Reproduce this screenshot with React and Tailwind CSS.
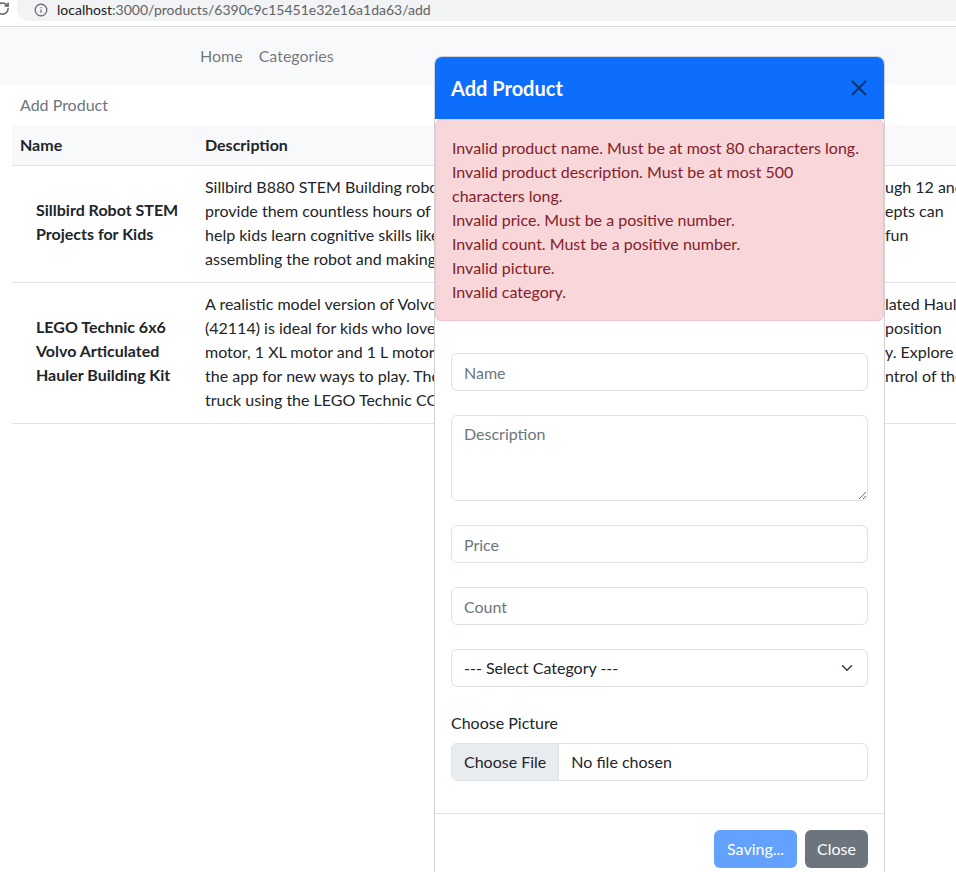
import React from 'react';
import { RotateCw, Info } from 'lucide-react';

const products = [
  {
    id: 1,
    name: ['Sillbird Robot STEM', 'Projects for Kids'],
    pad: 'pt-[9px] pb-[11px]',
    lines: [
      ['Sillbird B880 STEM Building robot kit is designed for kids aged 8 thro', 'ugh 12 and'],
      ['provide them countless hours of fun while basic engineering conc', 'epts can'],
      ['help kids learn cognitive skills like problem solving and have', ' fun'],
      ['assembling the robot and making it move.', ''],
    ],
  },
  {
    id: 2,
    name: ['LEGO Technic 6x6', 'Volvo Articulated', 'Hauler Building Kit'],
    pad: 'pt-[9px] pb-[11px]',
    lines: [
      ['A realistic model version of Volvo’s 6x6 Volvo Artic', 'lated Hauler'],
      ['(42114) is ideal for kids who love construction vehicles. It has a p', 'position'],
      ['motor, 1 XL motor and 1 L motor controlled through the CONTROL+ ap', 'y. Explore'],
      ['the app for new ways to play. The challenge is to take full co', 'ntrol of the'],
      ['truck using the LEGO Technic CONTROL+ app.', ''],
    ],
  },
];

const errors = [
  'Invalid product name. Must be at most 80 characters long.',
  'Invalid product description. Must be at most 500 characters long.',
  'Invalid price. Must be a positive number.',
  'Invalid count. Must be a positive number.',
  'Invalid picture.',
  'Invalid category.',
];

const App = () => {
  return (
    <div className="relative w-[956px] h-[872px] overflow-hidden bg-white font-['Lato',sans-serif] text-[#212529]">
      {/* Browser address bar */}
      <div className="h-[27px] flex border-b border-[#dadce0] bg-white">
        <div className="w-[22px] h-[22px] flex items-start -ml-[5px] pt-[1px] text-[#5f6368]">
          <RotateCw size={15} strokeWidth={2.4} />
        </div>
        <div className="flex-1 h-[22px] bg-[#f1f3f4] rounded-bl-[12px] flex items-center pl-[17px] -mt-[1px]">
          <Info size={14} strokeWidth={2} className="text-[#5f6368]" />
          <span className="ml-[9px] text-[14px] leading-none text-[#5f6368]">
            <span className="text-[#202124]">localhost</span>:3000/products/6390c9c15451e32e16a1da63/add
          </span>
        </div>
      </div>

      {/* Navbar */}
      <nav className="h-[58px] bg-[#f8f9fa] flex items-center pl-[192px]">
        <a className="px-2 text-black/55">Home</a>
        <a className="px-2 text-black/55">Categories</a>
      </nav>

      <div className="h-10 flex items-center px-5 text-[#6c757d]">Add Product</div>

      {/* Products table */}
      <table className="ml-3 w-[1200px] border-collapse leading-6">
        <thead>
          <tr className="bg-[#f8f9fa] border-b border-[#dee2e6]">
            <th className="w-[185px] px-2 py-2 text-left font-bold">Name</th>
            <th className="px-2 py-2 text-left font-bold">Description</th>
          </tr>
        </thead>
        <tbody>
          {products.map(p => (
            <tr key={p.id} className="border-b border-[#dee2e6]">
              <td className="pl-6 pr-1 pb-1 align-middle font-bold whitespace-nowrap">
                {p.name.map(n => (
                  <div key={n}>{n}</div>
                ))}
              </td>
              <td className={`px-2 ${p.pad}`}>
                {p.lines.map(([left, right], i) => (
                  <div key={i} className="flex whitespace-nowrap">
                    <span className="inline-block w-[680px] overflow-hidden">{left}</span>
                    <span>{right}</span>
                  </div>
                ))}
              </td>
            </tr>
          ))}
        </tbody>
      </table>

      {/* Add product modal */}
      <div className="absolute left-[434px] top-[56px] w-[451px] bg-white border border-black/[.175] rounded-lg">
        <div className="h-[62px] bg-[#0d6efd] rounded-t-[7px] flex items-center justify-between px-4">
          <h5 className="text-xl leading-[30px] font-bold text-white">Add Product</h5>
          <button className="w-8 h-8 flex items-center justify-center mr-[-7px]">
            <svg width="16" height="16" viewBox="0 0 16 16">
              <path d="M1 1L15 15M15 1L1 15" stroke="#0a3468" strokeWidth="2" />
            </svg>
          </button>
        </div>

        <div className="bg-[#f8d7da] border border-[#f5c2c7] text-[#842029] rounded-md p-4 leading-6">
          {errors.map(e => (
            <div key={e}>{e}</div>
          ))}
        </div>

        <form className="px-4 pt-[32px] pb-8">
          <input
            placeholder="Name"
            className="block w-full h-[38px] mb-6 px-3 border border-[#dee2e6] rounded-md outline-none placeholder:text-[#6c757d]"
          />
          <textarea
            rows={3}
            placeholder="Description"
            className="block w-full h-[86px] mb-6 px-3 py-1.5 leading-6 border border-[#dee2e6] rounded-md outline-none placeholder:text-[#6c757d]"
          />
          <input
            placeholder="Price"
            className="block w-full h-[38px] mb-6 px-3 border border-[#dee2e6] rounded-md outline-none placeholder:text-[#6c757d]"
          />
          <input
            placeholder="Count"
            className="block w-full h-[38px] mb-6 px-3 border border-[#dee2e6] rounded-md outline-none placeholder:text-[#6c757d]"
          />
          <div className="relative h-[38px] mb-6 border border-[#dee2e6] rounded-md flex items-center px-3">
            <span>--- Select Category ---</span>
            <svg className="absolute right-3 top-[12px]" width="16" height="12" viewBox="0 0 16 16">
              <path d="M2 5l6 6 6-6" fill="none" stroke="#343a40" strokeWidth="2" strokeLinecap="round" strokeLinejoin="round" />
            </svg>
          </div>
          <label className="block mb-2 leading-6">Choose Picture</label>
          <div className="h-[38px] flex border border-[#dee2e6] rounded-md overflow-hidden">
            <span className="px-3 flex items-center bg-[#e9ecef] border-r border-[#dee2e6]">Choose File</span>
            <span className="px-3 flex items-center">No file chosen</span>
          </div>
        </form>

        <div className="border-t border-[#dee2e6] pt-4 pr-4 pb-4 flex justify-end gap-2">
          <button className="h-[38px] px-[13px] rounded-md bg-[#62a1fe] text-white">Saving...</button>
          <button className="h-[38px] px-3 rounded-md bg-[#6c757d] text-white">Close</button>
        </div>
      </div>
    </div>
  );
};

export default App;
